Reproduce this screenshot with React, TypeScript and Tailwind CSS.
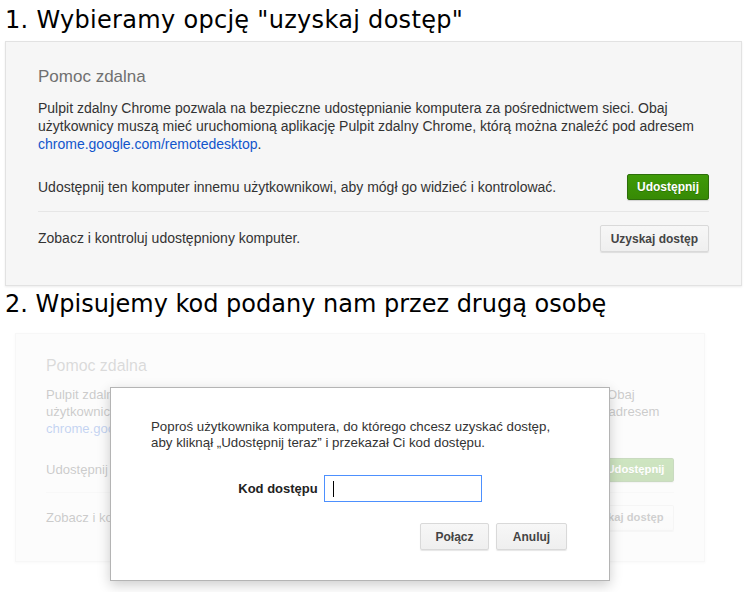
import React from 'react';

const GreenButton: React.FC<{ label: string }> = ({ label }) => (
  <button className="h-[26px] rounded-[2px] border border-[#2d6e0a] bg-gradient-to-b from-[#3f9a08] to-[#378a05] px-[9px] text-[12px] font-bold text-white shadow-[0_1px_1px_rgba(0,0,0,0.15)] [text-shadow:0_1px_0_rgba(0,0,0,0.2)]">
    {label}
  </button>
);

const GrayButton: React.FC<{ label: string; className?: string }> = ({ label, className = '' }) => (
  <button
    className={`h-[27px] rounded-[2px] border border-[#d9d9d9] bg-gradient-to-b from-[#f7f7f7] to-[#efefef] px-[10px] text-[12px] font-bold text-[#444] shadow-[0_1px_1px_rgba(0,0,0,0.1)] ${className}`}
  >
    {label}
  </button>
);

const RemotePanel: React.FC = () => (
  <div className="w-[737px] border border-[#e2e2e2] bg-[#f6f6f6] px-[32px] pt-[25px] pb-[33px] font-['Liberation_Sans',Arial,sans-serif] shadow-[0_1px_2px_rgba(0,0,0,0.08)]">
    <h2 className="text-[17px] leading-[20px] text-[#707070]">Pomoc zdalna</h2>
    <p className="mt-[12px] text-[14px] leading-[18px] text-[#333]">
      Pulpit zdalny Chrome pozwala na bezpieczne udostępnianie komputera za pośrednictwem sieci. Obaj
      użytkownicy muszą mieć uruchomioną aplikację Pulpit zdalny Chrome, którą można znaleźć pod adresem{' '}
      <span className="text-[#1155cc]">chrome.google.com/remotedesktop</span>.
    </p>
    <div className="flex items-center justify-between border-b border-[#e6e6e6] pt-[21px] pb-[11px]">
      <span className="text-[14px] text-[#333]">
        Udostępnij ten komputer innemu użytkownikowi, aby mógł go widzieć i kontrolować.
      </span>
      <GreenButton label="Udostępnij" />
    </div>
    <div className="flex items-center justify-between pt-[13px]">
      <span className="text-[14px] text-[#333]">Zobacz i kontroluj udostępniony komputer.</span>
      <GrayButton label="Uzyskaj dostęp" />
    </div>
  </div>
);

export default function App() {
  return (
    <div className="h-[592px] w-[750px] overflow-hidden bg-white">
      <h1 className="mt-[5px] pl-[5px] font-['DejaVu_Sans',Verdana,sans-serif] text-[24px] leading-[30px] tracking-[0.3px] text-black">
        1. Wybieramy opcję "uzyskaj dostęp"
      </h1>
      <div className="mt-[6px] ml-[5px]">
        <RemotePanel />
      </div>

      <h1 className="mt-[3px] pl-[5px] font-['DejaVu_Sans',Verdana,sans-serif] text-[24px] leading-[30px] text-black">
        2. Wpisujemy kod podany nam przez drugą osobę
      </h1>

      <div className="relative mt-[14px] pl-[15px]">
        <div className="opacity-25 [zoom:0.936]">
          <RemotePanel />
        </div>

        {/* dialog on top of the faded panel */}
        <div className="absolute left-[110px] top-[54px] w-[500px] border border-[#b4b4b4] bg-white pt-[31px] pb-[30px] font-['Liberation_Sans',Arial,sans-serif] shadow-[0_4px_12px_rgba(0,0,0,0.2)]">
          <p className="pl-[40px] text-[13.3px] leading-[16px] text-[#333]">
            Poproś użytkownika komputera, do którego chcesz uzyskać dostęp,
            <br />
            aby kliknął „Udostępnij teraz” i przekazał Ci kod dostępu.
          </p>
          <div className="mt-[24px] flex items-center justify-center gap-[6px]">
            <span className="text-[13px] font-bold text-[#222]">Kod dostępu</span>
            <div className="flex h-[27px] w-[158px] items-center border border-[#4d90fe] pl-[8px]">
              <div className="h-[16px] w-px bg-black" />
            </div>
          </div>
          <div className="mt-[21px] flex justify-end gap-[7px] pr-[42px]">
            <GrayButton label="Połącz" className="h-[26px] w-[69px]" />
            <GrayButton label="Anuluj" className="h-[26px] w-[71px]" />
          </div>
        </div>
      </div>
    </div>
  );
}
